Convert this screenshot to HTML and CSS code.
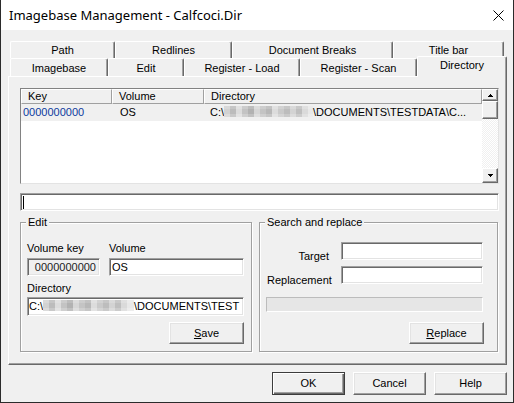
FILE: index.html
```html
<!DOCTYPE html>
<html>
<head>
<meta charset="utf-8">
<title>Imagebase Management</title>
<link rel="stylesheet" href="styles.css">
</head>
<body>
<div class="window">
  <div class="titlebar">
    <span class="title">Imagebase Management - Calfcoci.Dir</span>
    <svg class="close" width="11" height="11" viewBox="0 0 11 11"><path d="M0.5 0.5L10.5 10.5M10.5 0.5L0.5 10.5" stroke="#000" stroke-width="1" fill="none"/></svg>
  </div>
  <div class="client">
    <div class="tabs">
      <div class="tabrow row1">
        <div class="tab t-path">Path</div>
        <div class="tab t-red">Redlines</div>
        <div class="tab t-doc">Document Breaks</div>
        <div class="tab t-title">Title bar</div>
      </div>
      <div class="tabrow row2">
        <div class="tab t-img">Imagebase</div>
        <div class="tab t-edit">Edit</div>
        <div class="tab t-load">Register - Load</div>
        <div class="tab t-scan">Register - Scan</div>
        <div class="tab t-dir sel">Directory</div>
      </div>
    </div>
    <div class="panel">
      <div class="list">
        <div class="lv">
          <div class="lv-head">
            <div class="hcell c-key">Key</div>
            <div class="hcell c-vol">Volume</div>
            <div class="hcell c-dir">Directory</div>
          </div>
          <div class="lv-row">
            <div class="cell c-key key">0000000000</div>
            <div class="cell c-vol vol-cell">OS</div>
            <div class="cell c-dir dir-cell">C:\<span class="blur b-list"></span>\DOCUMENTS\TESTDATA\C...</div>
          </div>
        </div>
        <div class="vscroll">
          <div class="sbtn up"><svg width="5" height="3" viewBox="0 0 5 3"><rect x="2" y="0" width="1" height="1"/><rect x="1" y="1" width="3" height="1"/><rect x="0" y="2" width="5" height="1"/></svg></div>
          <div class="thumb"></div>
          <div class="track"></div>
          <div class="sbtn down"><svg width="5" height="3" viewBox="0 0 5 3"><rect x="0" y="0" width="5" height="1"/><rect x="1" y="1" width="3" height="1"/><rect x="2" y="2" width="1" height="1"/></svg></div>
        </div>
      </div>
      <div class="pathfield sunken"><span class="caret"></span></div>
      <div class="groups">
        <div class="group g-edit">
          <span class="legend">Edit</span>
          <div class="lbls">
            <span class="lbl-key">Volume key</span>
            <span>Volume</span>
          </div>
          <div class="fields">
            <div class="vkey sunken">0000000000</div>
            <div class="vol sunken">OS</div>
          </div>
          <div class="dirlbl">Directory</div>
          <div class="dirinput sunken">C:\<span class="blur b-edit"></span>\DOCUMENTS\TEST</div>
          <div class="btn save"><span><u>S</u>ave</span></div>
        </div>
        <div class="group g-search">
          <span class="legend">Search and replace</span>
          <div class="srow">
            <span class="slbl">Target</span>
            <div class="sinput sunken"></div>
          </div>
          <div class="srow">
            <span class="slbl">Replacement</span>
            <div class="sinput sunken"></div>
          </div>
          <div class="progress"></div>
          <div class="btn replace"><span><u>R</u>eplace</span></div>
        </div>
      </div>
    </div>
    <div class="footer">
      <div class="btn fbtn default">OK</div>
      <div class="btn fbtn">Cancel</div>
      <div class="btn fbtn">Help</div>
    </div>
  </div>
</div>
</body>
</html>
```
FILE: styles.css
```css
* { box-sizing: border-box; }
html, body { margin: 0; padding: 0; }
body {
  width: 514px;
  height: 403px;
  overflow: hidden;
  background: #f0f0f0;
  font-family: "Liberation Sans", Arial, sans-serif;
  font-size: 11px;
  color: #000;
}
.window {
  width: 514px;
  height: 403px;
  border: 1px solid #2b2b2b;
  border-top: none;
  background: #f0f0f0;
  display: flex;
  flex-direction: column;
}
.titlebar {
  flex: none;
  height: 30px;
  background: #fff;
  display: flex;
  align-items: center;
  padding: 0 9px 0 8px;
}
.title {
  font-family: "Noto Sans", "Segoe UI", sans-serif;
  font-size: 13px;
  line-height: 16px;
  color: #000;
}
.close { margin-left: auto; }

.client {
  flex: 1;
  display: flex;
  flex-direction: column;
  padding: 11px 0 0 7px;
}
.tabs { margin-left: 2px; }
.tabrow { display: flex; }
.row1 { height: 17px; }
.row2 { height: 18px; }
.tab {
  flex: none;
  text-align: center;
  line-height: 16px;
  white-space: nowrap;
  background: #f0f0f0;
  border-top: 1px solid #fff;
  border-left: 1px solid #fff;
  border-right: 1px solid #696969;
  box-shadow: inset -1px 0 0 #a0a0a0;
  border-radius: 2px 2px 0 0;
}
.row1 .tab { height: 17px; }
.row2 .tab { height: 18px; padding-top: 1px; }
.row2 .tab.sel {
  height: 21px;
  margin-top: -2px;
  position: relative;
  z-index: 1;
  padding-top: 0;
}
.t-path { width: 105px; }
.t-red { width: 117px; }
.t-doc { width: 161px; }
.t-title { width: 111px; }
.t-img { width: 98px; }
.t-edit { width: 76px; }
.t-load { width: 116px; }
.t-scan { width: 117px; }
.t-dir { width: 90px; }

.panel {
  width: 499px;
  height: 289px;
  border-top: 1px solid #fff;
  border-left: 1px solid #fff;
  border-right: 1px solid #696969;
  border-bottom: 1px solid #696969;
  box-shadow: inset -1px -1px 0 #a0a0a0;
  padding: 11px 7px 0 11px;
}

.sunken {
  background: #fff;
  border: 1px solid;
  border-color: #a0a0a0 #fff #fff #a0a0a0;
  box-shadow: inset 1px 1px 0 #696969, inset -1px -1px 0 #e3e3e3;
}

.list {
  height: 96px;
  display: flex;
  background: #fff;
  border: 1px solid;
  border-color: #828282 #e3e3e3 #e3e3e3 #828282;
}
.lv { flex: 1; background: #fff; }
.lv-head { display: flex; height: 15px; }
.hcell {
  line-height: 13px;
  padding-left: 6px;
  background: #f0f0f0;
  border-top: 1px solid #fff;
  border-left: 1px solid #fff;
  border-right: 1px solid #a0a0a0;
  border-bottom: 1px solid #a0a0a0;
}
.c-key { width: 91px; flex: none; }
.c-vol { width: 92px; flex: none; }
.c-dir { flex: 1; }
.lv-row {
  display: flex;
  height: 17px;
  line-height: 17px;
  background: #f0f0f0;
}
.cell { white-space: nowrap; overflow: hidden; }
.key { padding-left: 2px; color: #0d3a9e; }
.vol-cell { padding-left: 8px; }
.dir-cell { padding-left: 6px; }

.blur {
  display: inline-block;
  vertical-align: -1px;
  height: 11px;
  background:
    linear-gradient(180deg, rgba(255,255,255,0.15) 0 3px, rgba(255,255,255,0) 3px 8px, rgba(255,255,255,0.2) 8px 11px),
    linear-gradient(90deg, #d2d2d2 0 6px, #bcbcbc 6px 12px, #dcdcdc 12px 18px, #c3c3c3 18px 24px, #b2b2b2 24px 30px, #d6d6d6 30px 36px, #c4c4c4 36px 42px, #b8b8b8 42px 48px, #dcdcdc 48px 54px, #cacaca 54px 60px, #bdbdbd 60px 66px, #d3d3d3 66px 72px, #bfbfbf 72px 78px, #dadada 78px 84px, #e8e8e8 84px 100px);
}
.b-list { width: 89px; }
.b-edit { width: 91px; }

.vscroll {
  width: 16px;
  flex: none;
  display: flex;
  flex-direction: column;
  background-color: #f0f0f0;
  background-image: repeating-conic-gradient(#fff 0 25%, #f0f0f0 0 50%);
  background-size: 2px 2px;
}
.sbtn, .thumb {
  background: #f0f0f0;
  border: 1px solid;
  border-color: #fff #696969 #696969 #fff;
  box-shadow: inset -1px -1px 0 #a0a0a0;
  display: flex;
  align-items: center;
  justify-content: center;
}
.sbtn svg { fill: #000; }
.up { height: 12px; }
.thumb { height: 18px; }
.track { flex: 1; }
.down { height: 15px; }

.pathfield {
  margin-top: 9px;
  height: 18px;
  width: 479px;
  display: flex;
  align-items: center;
  padding-left: 2px;
}
.caret { width: 1px; height: 13px; background: #000; }

.groups {
  display: flex;
  gap: 7px;
  margin-top: 11px;
}
.group {
  position: relative;
  height: 130px;
  border: 1px solid #a0a0a0;
  box-shadow: inset 1px 1px 0 #fff, 1px 1px 0 #fff;
  display: flex;
  flex-direction: column;
}
.legend {
  position: absolute;
  top: -7px;
  left: 5px;
  padding: 0 2px;
  line-height: 13px;
  background: #f0f0f0;
}
.g-edit { width: 232px; padding: 19px 7px 0 6px; }
.g-search { width: 239px; padding: 19px 14px 0 7px; }

.lbls { display: flex; height: 13px; line-height: 13px; }
.lbl-key { width: 82px; }
.fields { display: flex; gap: 9px; margin-top: 3px; height: 18px; }
.vkey {
  width: 73px;
  flex: none;
  background: #f0f0f0;
  text-align: right;
  padding-right: 3px;
  line-height: 16px;
  color: #222;
}
.vol { flex: 1; padding-left: 2px; line-height: 16px; }
.dirlbl { margin-top: 6px; line-height: 13px; }
.dirinput {
  margin-top: 2px;
  height: 19px;
  line-height: 17px;
  padding-left: 1px;
  white-space: nowrap;
  overflow: hidden;
}

.btn {
  display: flex;
  align-items: center;
  justify-content: center;
  background: #f0f0f0;
  border: 1px solid;
  border-color: #fff #696969 #696969 #fff;
  box-shadow: inset -1px -1px 0 #a0a0a0, inset 1px 1px 0 #e3e3e3;
  line-height: 13px;
}
.btn u { text-decoration: underline; }
.save { margin-top: 6px; margin-left: auto; width: 75px; height: 22px; }

.srow { display: flex; align-items: flex-end; height: 18px; }
.srow + .srow { margin-top: 6px; }
.slbl {
  width: 62px;
  flex: none;
  text-align: right;
  line-height: 13px;
  margin-right: 12px;
  margin-bottom: -3px;
}
.sinput { flex: 1; height: 18px; }
.progress {
  margin-top: 13px;
  margin-left: -1px;
  height: 15px;
  background: #e6e6e6;
  border: 1px solid;
  border-color: #bcbcbc #fff #fff #bcbcbc;
}
.replace { margin-top: 10px; margin-left: auto; margin-right: -1px; width: 75px; height: 22px; }

.footer {
  display: flex;
  justify-content: flex-end;
  gap: 8px;
  margin-top: 7px;
  padding-right: 6px;
}
.fbtn { width: 73px; height: 23px; }
.default {
  border: 1px solid #3c3c3c;
  box-shadow: inset 1px 1px 0 #fff, inset -1px -1px 0 #696969, inset -2px -2px 0 #a0a0a0;
}
```
